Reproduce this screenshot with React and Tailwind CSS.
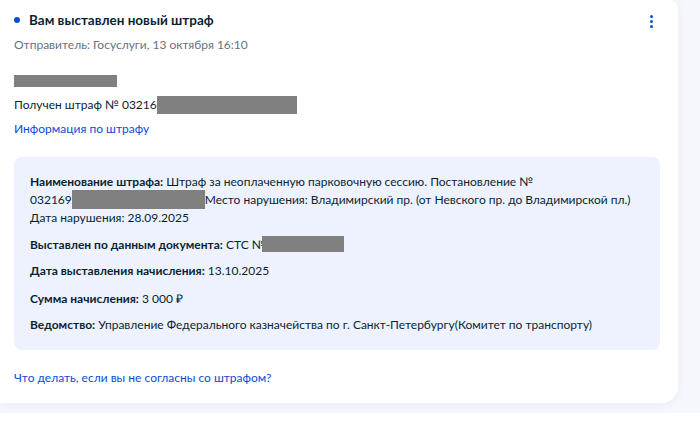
export default function App() {
  return (
    <div className="relative h-[422px] w-[700px] overflow-hidden bg-white font-['Lato',sans-serif] text-[#0b1f33]">
      <div className="h-[413px] w-full bg-[#f5f7fc]">
        <div className="relative h-[403px] w-[678px] rounded-br-2xl rounded-tr-lg bg-white shadow-[0_2px_8px_rgba(40,60,120,0.06)]">
          <div className="flex items-center pl-[14px] pt-[10px]">
            <span className="mr-[9px] h-[6px] w-[6px] rounded-full bg-[#0d4cd3]" />
            <h1 className="text-[13.5px] font-bold leading-[20px]">Вам выставлен новый штраф</h1>
          </div>
          <button className="absolute right-[25px] top-[15px] flex flex-col gap-[2px]" type="button" aria-label="Меню">
            <span className="h-[3px] w-[3px] rounded-full bg-[#0d4cd3]" />
            <span className="h-[3px] w-[3px] rounded-full bg-[#0d4cd3]" />
            <span className="h-[3px] w-[3px] rounded-full bg-[#0d4cd3]" />
          </button>
          <p className="mt-[5px] pl-[14px] text-[12px] leading-[20px] text-[#66727f]">Отправитель: Госуслуги, 13 октября 16:10</p>
          <div className="ml-[14px] mt-[20px] h-[12px] w-[103px] bg-[#808080]" />
          <p className="mt-[9px] flex items-center pl-[14px] text-[12px] leading-[18px]">
            Получен штраф № 03216<span className="inline-block h-[18px] w-[140px] bg-[#808080]" />
          </p>
          <a className="mt-[6px] block pl-[14px] text-[12px] leading-[18px] text-[#0d4cd3]" href="#">Информация по штрафу</a>
          <section className="ml-[14px] mr-[18px] mt-[19px] rounded-lg bg-[#edf2fe] px-[16px] pb-[17px] pt-[16px] text-[12px] leading-[17px]">
            <p>
              <b>Наименование штрафа:</b> Штраф за неоплаченную парковочную сессию. Постановление №<br />
              032169<span className="inline-block h-[19px] w-[133px] bg-[#808080] align-[-5px]" />Место нарушения: Владимирский пр. (от Невского пр. до Владимирской пл.)<br />
              Дата нарушения: 28.09.2025
            </p>
            <p className="mt-[10px]"><b>Выставлен по данным документа:</b> СТС №<span className="-ml-[4px] inline-block h-[16px] w-[82px] bg-[#808080] align-[-3px]" /></p>
            <p className="mt-[9px]"><b>Дата выставления начисления:</b> 13.10.2025</p>
            <p className="mt-[11px]"><b>Сумма начисления:</b> 3 000 ₽</p>
            <p className="mt-[9px]"><b>Ведомство:</b> Управление Федерального казначейства по г. Санкт-Петербургу(Комитет по транспорту)</p>
          </section>
          <a className="mt-[19px] block pl-[14px] text-[12px] leading-[18px] text-[#0d4cd3]" href="#">Что делать, если вы не согласны со штрафом?</a>
        </div>
      </div>
    </div>
  );
}
